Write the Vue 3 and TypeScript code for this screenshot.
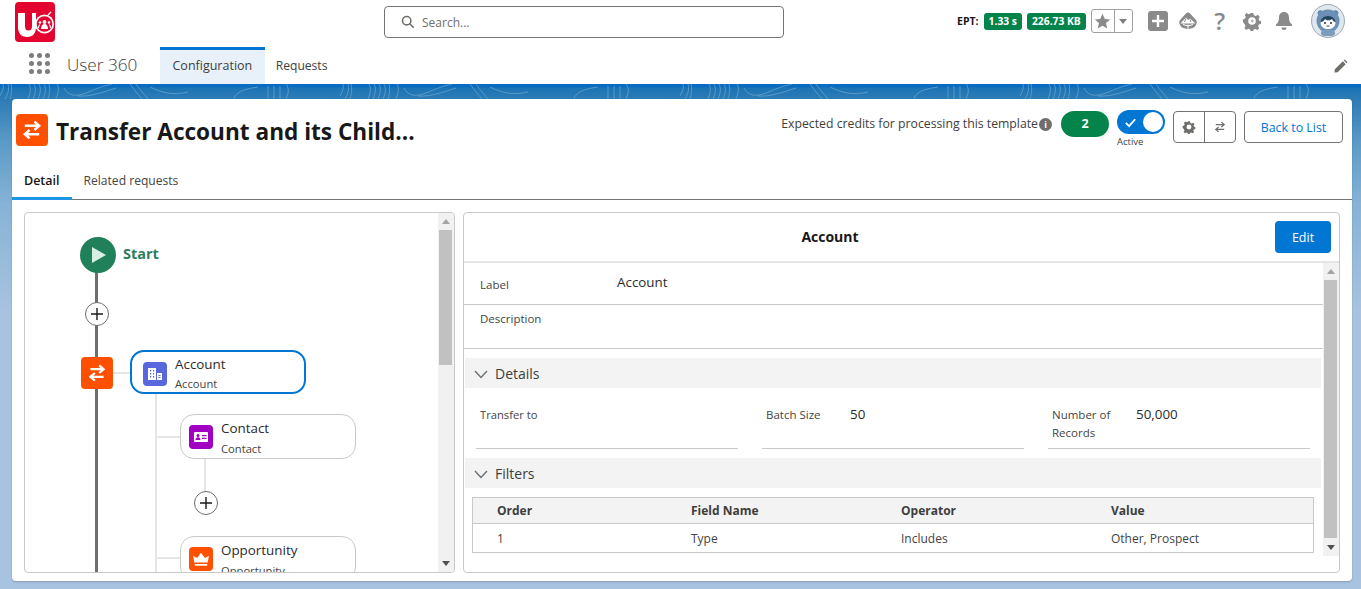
<script setup lang="ts">
const headers = ['Order', 'Field Name', 'Operator', 'Value']
const cells = ['1', 'Type', 'Includes', 'Other, Prospect']
const contours = [
  'M0 12C3 6 4 4 3 0M5 15C9 8 9 5 8 0M10 15C12 8 12 5 11 0',
  'M28 15C31 8 31 4 29 0M33 15C36 8 36 4 34 0M38 15C41 8 41 4 39 0M43 15C46 8 46 4 44 0M48 15C50 8 50 4 49 0M56 15C59 8 59 4 57 0',
  'M64 4C68 12 76 13 86 9S100 3 112 0M78 12C90 13 104 8 116 4',
  'M130 0C134 6 138 10 142 15M136 0C140 6 144 10 148 15M150 3C160 8 172 12 188 8',
  'M234 15C236 8 244 5 258 3M268 15V2M274 15V2M280 15V2M286 15C289 8 289 4 286 0',
]
const offsets = [0, 340, 680, 1020]
</script>

<template>
  <div class="page">
    <header class="top">
      <div class="logo">
        <svg viewBox="0 0 40 40" width="40" height="40">
          <rect width="40" height="40" rx="4" fill="#e4032e" />
          <path d="M3 11h7v13c0 3 1 4.500 3.500 4.500S17 27 17 24V11h4v14c0 6-3 10-9 10S3 31 3 25z" fill="#fff" />
          <circle cx="29.500" cy="22" r="9.500" fill="#fff" />
          <circle cx="29.500" cy="22" r="7.800" fill="#e4032e" />
          <circle cx="29.500" cy="20" r="1.900" fill="#fff" />
          <path d="M26 27c0-3 1.200-5 3.500-5s3.500 2 3.500 5z" fill="#fff" />
          <circle cx="25" cy="20.500" r="1.300" fill="#fff" />
          <circle cx="34" cy="20.500" r="1.300" fill="#fff" />
          <path d="M23.500 26c0-2 .5-3 1.500-3.500M35.500 26c0-2-.5-3-1.500-3.500" stroke="#fff" stroke-width="1.200" fill="none" />
          <path d="M33 13l3-3" stroke="#fff" stroke-width="1.200" />
        </svg>
      </div>
      <div class="search">
        <svg viewBox="0 0 16 16" width="14" height="14" fill="none" stroke="#706e6b" stroke-width="1.800">
          <circle cx="6.500" cy="6.500" r="4.800" /><path d="M10 10l4.500 4.500" />
        </svg>
        <span>Search...</span>
      </div>
      <div class="tools">
        <b class="ept">EPT:</b>
        <span class="metric">1.33 s</span>
        <span class="metric">226.73 KB</span>
        <div class="fav">
          <span class="fav-star">
            <svg viewBox="0 0 20 20" width="17" height="17"><path d="M10 1l2.700 6 6.300.6-4.800 4.200 1.400 6.400L10 15l-5.600 3.200 1.400-6.400L1 7.600 7.300 7z" fill="#8a8a8a" /></svg>
          </span>
          <span class="fav-caret"><i class="caret"></i></span>
        </div>
        <svg class="plus-box" viewBox="0 0 20 20" width="20" height="20">
          <rect width="20" height="20" rx="3" fill="#8a8a8a" /><path d="M10 4v12M4 10h12" stroke="#fff" stroke-width="2.400" />
        </svg>
        <svg class="tool" viewBox="0 0 20 20" width="20" height="20">
          <path d="M10 1.500c1 0 1.500.5 2.500 1.500l5.500 6c1 1.500 1 3 .2 4.500-.8 2-2.400 4-8.200 4.500-5.800-.5-7.400-2.500-8.200-4.500C1 12 1 10.500 2 9l5.500-6c1-1 1.500-1.500 2.500-1.500z" fill="#8a8a8a" />
          <path d="M2.500 12.500 8 6.500l2 2.500 2-1.500 5.500 5z" fill="#fff" />
          <path d="M8 7.500 6.500 11M12 8.500l1 2.500" stroke="#8a8a8a" stroke-width="1" />
          <path d="M10 13.500V18M5 13.500l5 1.500 5-1.500" stroke="#fff" stroke-width="1" fill="none" />
        </svg>
        <span class="help">?</span>
        <svg class="tool" viewBox="0 0 20 20" width="20" height="20">
          <path d="M8.500 1h3l.6 2.600 2.200.9 2.300-1.400 2 2.200-1.300 2.300.8 2.100 2 .6v2.800l-2.400.7-.9 2.100 1.300 2.200-2.100 2-2.200-1.300-2.200.9-.6 2.200H8.500l-.6-2.400-2.200-.8-2.200 1.300-2-2.100 1.300-2.200-.9-2.200L-.1 11V8.300l2.300-.7.9-2.100L1.900 3.200 4 1.200l2.200 1.400 2-.9z" fill="#8a8a8a" transform="translate(1 1) scale(.9)" />
          <circle cx="10" cy="10" r="3.800" fill="#fff" /><path d="M10.800 7.500 8.700 10.400h1.900l-1 2.300 2.300-3.100h-1.800z" fill="#8a8a8a" />
        </svg>
        <svg class="tool" viewBox="0 0 20 20" width="20" height="20">
          <path d="M10 1c-3 0-5 2.300-5 5.300 0 4-1 5.700-3 7.200v1.500h16v-1.500c-2-1.500-3-3.200-3-7.200 0-3-2-5.300-5-5.300z" fill="#8a8a8a" />
          <path d="M7.500 16.500a2.500 2.500 0 0 0 5 0z" fill="#8a8a8a" />
        </svg>
        <svg class="avatar" viewBox="0 0 34 34" width="34" height="34">
          <circle cx="17" cy="17" r="16.500" fill="#dfe7ef" stroke="#8c97a3" stroke-width=".8" />
          <circle cx="9.500" cy="9" r="2.800" fill="#5f86ad" /><circle cx="24.500" cy="9" r="2.800" fill="#5f86ad" />
          <circle cx="17" cy="17" r="11.500" fill="#6b90b5" />
          <rect x="10" y="26" width="14" height="6" rx="3" fill="#7e9cbb" />
          <path d="M9.500 19c1-4 3.500-5.500 7.500-5.500s6.500 1.500 7.500 5.500c-.5 4-3.500 6-7.500 6s-7-2-7.500-6z" fill="#fff" />
          <path d="M9.500 18c2 0 3.500-1 4.500-3 1 1.500 5 2 7 0 1 2 2 3 3.500 3-.5-3-3-6-7.500-6s-7 3-7.500 6z" fill="#27445f" />
          <circle cx="14" cy="19" r="1" fill="#24303c" /><circle cx="20" cy="19" r="1" fill="#24303c" />
          <path d="M15.500 22h3" stroke="#24303c" stroke-width=".9" />
        </svg>
      </div>
    </header>

    <nav class="nav">
      <div class="waffle"><i v-for="n in 9" :key="n"></i></div>
      <span class="app-name">User 360</span>
      <a class="nav-tab active">Configuration</a>
      <a class="nav-tab">Requests</a>
      <svg class="pencil" viewBox="0 0 16 16" width="15" height="15">
        <path d="M2 11 10.500 2.500l3 3L5 14l-3.500.5zM11.500 1.500l1-1 3 3-1 1z" fill="#706e6b" />
      </svg>
    </nav>

    <main class="stage">
      <svg class="contour" viewBox="0 0 1361 15" width="1361" height="15" fill="none" stroke="#6fa9d0" stroke-width=".7">
        <g v-for="x in offsets" :key="x" :transform="`translate(${x} 0)`">
          <path v-for="d in contours" :key="d" :d="d" />
        </g>
      </svg>
      <section class="card">
        <div class="head">
          <span class="badge big">
            <svg viewBox="0 0 20 20" width="24" height="24" fill="none" stroke="#fff" stroke-width="2">
              <path d="M4 6.500h12M12 3l4 3.500L12 10M16 13.500H4M8 10l-4 3.500L8 17" />
            </svg>
          </span>
          <h1>Transfer Account and its Child...</h1>
          <div class="actions">
            <span class="credits">Expected credits for processing this template</span>
            <span class="info">i</span>
            <span class="credit-pill">2</span>
            <div class="toggle-wrap">
              <span class="toggle">
                <svg viewBox="0 0 14 14" width="13" height="13" fill="none" stroke="#fff" stroke-width="2"><path d="M2 7.500 5.500 11 12 3.500" /></svg>
                <i></i>
              </span>
              <small>Active</small>
            </div>
            <div class="btn-group">
              <span>
                <svg viewBox="0 0 20 20" width="14" height="14">
                  <path d="M8.500 1h3l.6 2.600 2.200.9 2.300-1.400 2 2.200-1.300 2.300.8 2.100 2 .6v2.800l-2.400.7-.9 2.100 1.300 2.200-2.100 2-2.200-1.300-2.200.9-.6 2.200H8.500l-.6-2.400-2.200-.8-2.200 1.300-2-2.100 1.300-2.200-.9-2.200L-.1 11V8.300l2.300-.7.9-2.100L1.900 3.200 4 1.200l2.200 1.400 2-.9z" fill="#706e6b" transform="translate(1 1) scale(.9)" />
                  <circle cx="10" cy="10" r="3.500" fill="#fff" />
                </svg>
              </span>
              <span>
                <svg viewBox="0 0 20 20" width="14" height="14" fill="none" stroke="#706e6b" stroke-width="1.800">
                  <path d="M4 6.500h12M12 3l4 3.500L12 10M16 13.500H4M8 10l-4 3.500L8 17" />
                </svg>
              </span>
            </div>
            <button class="back">Back to List</button>
          </div>
        </div>

        <div class="tabs">
          <a class="tab active">Detail</a>
          <a class="tab">Related requests</a>
        </div>

        <div class="panels">
          <div class="panel left">
            <div class="canvas">
              <i class="line main"></i>
              <i class="line branch"></i>
              <i class="line h h1"></i>
              <i class="line h h2"></i>
              <i class="line h h3"></i>
              <i class="line contact-v"></i>

              <span class="start-circle">
                <svg viewBox="0 0 36 36" width="36" height="36"><path d="M12 10 26 18 12 26z" fill="#d8ede3" /></svg>
              </span>
              <span class="start-label">Start</span>
              <span class="add add1">
                <svg viewBox="0 0 14 14" width="14" height="14"><path d="M7 1v12M1 7h12" stroke="#181818" stroke-width="1.400" /></svg>
              </span>
              <span class="badge step">
                <svg viewBox="0 0 20 20" width="22" height="22" fill="none" stroke="#fff" stroke-width="2">
                  <path d="M4 6.500h12M12 3l4 3.500L12 10M16 13.500H4M8 10l-4 3.500L8 17" />
                </svg>
              </span>

              <div class="node selected n-account">
                <span class="obj blue">
                  <svg viewBox="0 0 16 16" width="16" height="16" fill="#fff">
                    <path d="M1 2h8v12H1zM10 7h5v7h-5z" /><path d="M3 4h1.200v1.500H3zM6 4h1.200v1.500H6zM3 7h1.200v1.500H3zM6 7h1.200v1.500H6zM3 10h1.200v1.500H3zM6 10h1.200v1.500H6zM11.500 9h2v1h-2zM11.500 11h2v1h-2z" fill="#5867dd" />
                  </svg>
                </span>
                <div class="node-text"><strong>Account</strong><em>Account</em></div>
              </div>
              <div class="node n-contact">
                <span class="obj purple">
                  <svg viewBox="0 0 16 16" width="16" height="16">
                    <rect x="1" y="3" width="14" height="10" rx="1" fill="#fff" />
                    <circle cx="5" cy="6.500" r="1.500" fill="#a100c2" /><path d="M2.500 11c0-2 1-2.700 2.500-2.700s2.500.7 2.500 2.700zM9 6h4.500v1.300H9zM9 8.800h4.500v1.300H9z" fill="#a100c2" />
                  </svg>
                </span>
                <div class="node-text"><strong>Contact</strong><em>Contact</em></div>
              </div>
              <span class="add add2">
                <svg viewBox="0 0 14 14" width="14" height="14"><path d="M7 1v12M1 7h12" stroke="#181818" stroke-width="1.400" /></svg>
              </span>
              <div class="node n-opp">
                <span class="obj orange">
                  <svg viewBox="0 0 16 16" width="18" height="18" fill="#fff">
                    <path d="M2 11 1 5l3.500 2L8 2.500 11.500 7 15 5l-1 6zM2.500 12.500h11V14h-11z" />
                  </svg>
                </span>
                <div class="node-text"><strong>Opportunity</strong><em>Opportunity</em></div>
              </div>
            </div>
            <div class="scrollbar s-left">
              <i class="arrow-up"></i>
              <i class="thumb"></i>
              <i class="arrow"></i>
            </div>
          </div>

          <div class="panel right">
            <div class="right-head">
              <h2>Account</h2>
              <button class="edit">Edit</button>
            </div>
            <div class="right-body">
              <div class="content">
                <div class="row label-row"><span class="lbl">Label</span><span class="val">Account</span></div>
                <div class="row desc-row"><span class="lbl">Description</span></div>

                <div class="section">
                  <svg viewBox="0 0 14 9" width="14" height="9" fill="none" stroke="#706e6b" stroke-width="1.400"><path d="M1 1l6 6.500L13 1" /></svg>
                  Details
                </div>
                <div class="fields">
                  <div class="field"><span class="lbl f1">Transfer to</span></div>
                  <div class="field"><span class="lbl f2">Batch Size</span><span class="val">50</span></div>
                  <div class="field"><span class="lbl f2">Number of Records</span><span class="val">50,000</span></div>
                </div>
                <div class="section">
                  <svg viewBox="0 0 14 9" width="14" height="9" fill="none" stroke="#706e6b" stroke-width="1.400"><path d="M1 1l6 6.500L13 1" /></svg>
                  Filters
                </div>

                <div class="table">
                  <div class="tr th"><span v-for="h in headers" :key="h">{{ h }}</span></div>
                  <div class="tr"><span v-for="c in cells" :key="c">{{ c }}</span></div>
                </div>
              </div>
              <div class="scrollbar s-right">
                <i class="arrow-up"></i>
                <i class="thumb"></i>
                <i class="arrow"></i>
              </div>
            </div>
          </div>
        </div>
      </section>
    </main>
  </div>
</template>

<style>
html, body { margin: 0; padding: 0; overflow: hidden; }
</style>

<style scoped>
.page {
  width: 1361px;
  height: 589px;
  overflow: hidden;
  display: flex;
  flex-direction: column;
  font-family: "Open Sans", "Noto Sans", sans-serif;
  color: #181818;
  background: #fff;
}
.top {
  height: 47px;
  flex: none;
  display: flex;
  align-items: flex-start;
  padding-left: 15px;
  box-sizing: border-box;
}
.logo { margin-top: 2px; height: 40px; }
.search {
  margin: 6px 0 0 329px;
  width: 400px;
  height: 32px;
  box-sizing: border-box;
  border: 1px solid #747474;
  border-radius: 4px;
  display: flex;
  align-items: center;
  gap: 7px;
  padding-left: 16px;
  font-size: 12px;
  color: #706e6b;
}
.tools {
  margin-left: 173px;
  display: flex;
  align-items: center;
  height: 36px;
  margin-top: 3px;
}
.ept { font-size: 10.500px; margin-right: 5px; }
.metric {
  background: #04844b;
  color: #fff;
  font-size: 10.300px;
  font-weight: 700;
  height: 17px;
  line-height: 17px;
  padding: 0 5px;
  border-radius: 3px;
  margin-right: 5px;
}
.fav {
  display: flex;
  height: 24px;
  border: 1px solid #a0a0a0;
  border-radius: 3px;
  margin-right: 15px;
  box-sizing: border-box;
}
.fav-star { width: 23px; display: flex; align-items: center; justify-content: center; border-right: 1px solid #a0a0a0; box-sizing: border-box; }
.fav-caret { width: 17px; display: flex; align-items: center; justify-content: center; }
.caret { width: 0; height: 0; border: 4px solid transparent; border-top: 5px solid #7f7f7f; border-bottom: 0; }
.plus-box { margin-right: 10px; }
.tool { margin-right: 12px; }
.help { font-size: 24px; color: #8a8a8a; font-weight: 600; width: 20px; text-align: center; margin-right: 12px; line-height: 24px; }
.avatar { margin-left: 5px; }

.nav {
  height: 37px;
  flex: none;
  display: flex;
  align-items: stretch;
  padding-left: 29px;
  box-sizing: border-box;
  position: relative;
}
.waffle {
  width: 22px;
  display: grid;
  grid-template-columns: repeat(3, 5px);
  grid-auto-rows: 5px;
  gap: 3px;
  align-self: center;
  margin-top: -4px;
}
.waffle i { background: #7c7c7c; border-radius: 50%; }
.app-name { font-size: 17.200px; font-weight: 300; color: #3e3e3c; margin-left: 16px; width: 93px; line-height: 36px; }
.nav-tab { font-size: 12.100px; padding: 0 11px; color: #3e3e3c; border-top: 3px solid transparent; line-height: 31px; }
.nav-tab.active { font-size: 12.500px; padding: 0 12.500px; background: #e8f1fa; border-top-color: #0176d3; }
.pencil { position: absolute; right: 13px; top: 12px; }

.stage {
  flex: 1;
  position: relative;
  padding: 15px 9px 8px 12px;
  min-height: 0;
  display: flex;
  background: linear-gradient(180deg, #0a6cc0 0, #0a6cc0 3px, #1b74b4 4px, #2c7cb6 15px, #5c9bc8 60px, #86b3d6 120px, #a8c3e0 230px, #a8c3e0 100%);
}
.contour { position: absolute; left: 0; top: 0; }
.card {
  position: relative;
  flex: 1;
  background: #fff;
  border-radius: 4px;
  box-shadow: 0 1px 2px rgba(0, 0, 0, .2);
  display: flex;
  flex-direction: column;
  min-width: 0;
}
.head {
  height: 67px;
  flex: none;
  display: flex;
  align-items: flex-start;
  padding: 15px 9px 0 4px;
  box-sizing: border-box;
}
.badge { display: flex; align-items: center; justify-content: center; background: #fe5000; border-radius: 4px; }
.badge.big { width: 32px; height: 32px; flex: none; }
h1 { margin: 0 0 0 8px; font-size: 22.600px; line-height: 36px; font-weight: 700; white-space: nowrap; }
.actions { margin-left: auto; display: flex; align-items: flex-start; }
.credits { font-size: 12.250px; line-height: 18px; margin-top: 1px; color: #3e3e3c; white-space: nowrap; }
.info {
  width: 13px; height: 13px; border-radius: 50%;
  background: #706e6b; color: #fff; font-size: 9px; font-weight: 700;
  text-align: center; line-height: 13px; margin: 4px 9px 0 1px;
}
.credit-pill {
  width: 48px; height: 26px; border-radius: 13px;
  background: #04844b; color: #fff; font-size: 12.500px; font-weight: 700;
  text-align: center; line-height: 26px; margin: -3px 8px 0 0;
}
.toggle-wrap { display: flex; flex-direction: column; align-items: flex-start; width: 48px; margin-top: -4px; margin-right: 8px; }
.toggle {
  width: 48px; height: 24px; border-radius: 12px; background: #0176d3;
  display: flex; align-items: center; justify-content: space-between; padding: 0 2px 0 7px; box-sizing: border-box;
}
.toggle i { width: 20px; height: 20px; background: #fff; border-radius: 50%; }
.toggle-wrap small { font-size: 9.500px; color: #444; line-height: 12px; margin-top: 2px; }
.btn-group {
  display: flex; height: 32px; box-sizing: border-box; margin-top: -3px;
  border: 1px solid #747474; border-radius: 4px; margin-right: 8px;
}
.btn-group span { width: 30px; display: flex; align-items: center; justify-content: center; box-sizing: border-box; }
.btn-group span + span { width: 31px; border-left: 1px solid #747474; }
.back {
  width: 99px; height: 32px; margin-top: -3px; padding: 0;
  background: #fff; border: 1px solid #747474; border-radius: 4px;
  color: #0176d3; font-family: inherit; font-size: 12.400px;
}
.tabs {
  height: 34px;
  flex: none;
  display: flex;
  border-bottom: 1px solid #747474;
  box-sizing: border-box;
}
.tab { font-size: 12.100px; color: #444; line-height: 30px; padding: 0 12px; margin-bottom: -1px; }
.tab.active { font-size: 12.500px; font-weight: 600; color: #181818; border-bottom: 3px solid #1b96e6; box-sizing: border-box; height: 34px; }
.panels {
  flex: 1;
  display: flex;
  gap: 8px;
  padding: 12px 12px 8px 12px;
  min-height: 0;
}
.panel {
  position: relative;
  border: 1px solid #c9c9c9;
  border-radius: 4px;
  box-sizing: border-box;
  overflow: hidden;
}
.left { width: 431px; flex: none; display: flex; }
.right { flex: 1; display: flex; flex-direction: column; min-width: 0; }

.canvas { position: relative; flex: 1; overflow: hidden; }
.line { position: absolute; display: block; background: #e5e5e5; }
.main { left: 70px; top: 40px; width: 3px; height: 330px; background: #706e6b; }
.branch { left: 130px; top: 181px; width: 2px; height: 190px; }
.h { height: 2px; }
.h1 { left: 88px; top: 159px; width: 18px; }
.h2 { left: 130px; top: 223px; width: 26px; }
.h3 { left: 130px; top: 344px; width: 26px; }
.contact-v { left: 179px; top: 246px; width: 2px; height: 33px; }
.start-circle {
  position: absolute; left: 55px; top: 24px; width: 36px; height: 36px;
  border-radius: 50%; background: #1f8059;
}
.start-label { position: absolute; left: 98px; top: 31px; font-size: 14.500px; font-weight: 700; color: #2e7d5c; line-height: 20px; }
.add {
  position: absolute; width: 24px; height: 24px; box-sizing: border-box;
  border: 1px solid #706e6b; border-radius: 50%; background: #fff;
  display: flex; align-items: center; justify-content: center;
}
.add1 { left: 60px; top: 89px; }
.add2 { left: 169px; top: 278px; }
.step { position: absolute; left: 56px; top: 144px; width: 32px; height: 32px; }
.node {
  position: absolute; width: 176px; height: 45px; box-sizing: border-box;
  background: #fff; border: 1px solid #c9c9c9; border-radius: 14px;
  display: flex; align-items: flex-start; padding-left: 8px;
}
.node.selected { border: 2px solid #0176d3; height: 44px; padding-left: 11px; }
.n-account { left: 105px; top: 137px; }
.n-contact { left: 155px; top: 201px; }
.n-opp { left: 155px; top: 323px; }
.obj { width: 24px; height: 24px; margin: 10px 8px 0 0; border-radius: 4px; display: flex; align-items: center; justify-content: center; flex: none; }
.blue { background: #5867dd; }
.purple { background: #a100c2; }
.orange { background: #fe5000; }
.node-text { display: flex; flex-direction: column; padding-top: 3px; }
.selected .node-text { padding-top: 2px; }
.node-text strong { font-size: 13.400px; font-weight: 400; line-height: 20px; color: #2b2b2b; }
.node-text em { font-size: 11.200px; font-style: normal; line-height: 21px; color: #444; }
.selected .node-text em { line-height: 20px; }

.scrollbar { position: relative; width: 16px; flex: none; background: #f1f1f1; }
.thumb { position: absolute; left: 1px; right: 2px; background: #c1c1c1; display: block; }
.arrow { position: absolute; left: 4px; bottom: 6px; width: 0; height: 0; border: 4px solid transparent; border-top: 5px solid #505050; border-bottom: 0; }
.arrow-up { position: absolute; left: 4px; top: 6px; width: 0; height: 0; border: 4px solid transparent; border-bottom: 5px solid #a3a3a3; border-top: 0; }
.s-left .thumb { top: 17px; height: 135px; }
.s-right .thumb { top: 17px; height: 258px; }

.right-head {
  height: 50px; flex: none; position: relative;
  display: flex; align-items: center; justify-content: center;
  padding: 0 143px 2px 0;
  border-bottom: 2px solid #e5e5e5; box-sizing: border-box;
}
h2 { margin: 0; font-size: 14px; font-weight: 700; }
.edit {
  position: absolute; right: 8px; top: 8px; width: 56px; height: 32px; padding: 0;
  background: #0176d3; color: #fff; border: 0; border-radius: 4px; font-family: inherit; font-size: 12.500px;
}
.right-body { flex: 1; display: flex; min-height: 0; }
.s-right { margin-bottom: 16px; }
.content { flex: 1; min-width: 0; }
.row { border-bottom: 1px solid #c9c9c9; display: flex; box-sizing: border-box; padding-left: 16px; }
.label-row { height: 42px; padding-top: 10px; }
.desc-row { height: 44px; padding-top: 5px; }
.lbl { font-size: 11.500px; color: #444; line-height: 18px; }
.val { font-size: 13.400px; color: #2b2b2b; line-height: 18px; }
.label-row .lbl { width: 137px; padding-top: 3px; }
.section {
  height: 30px; margin: 9px 2px 0 1px; background: #f3f3f3;
  display: flex; align-items: center; gap: 7px; padding-left: 9px;
  font-size: 14px; color: #3e3e3c;
}
.section svg { margin-top: 2px; }
.fields { display: flex; gap: 24px; padding: 0 13px 0 12px; height: 61px; box-sizing: border-box; }
.field {
  flex: 1; border-bottom: 1px solid #c9c9c9; display: flex;
  padding: 17px 0 0 4px; box-sizing: border-box;
}
.f2 { width: 84px; flex: none; padding-top: 1px; }
.f1 { padding-top: 1px; font-size: 11.200px; }
.table { margin: 9px 9px 0 8px; border: 1px solid #c9c9c9; }
.tr { display: grid; grid-template-columns: 194px 210px 210px 1fr; padding-left: 24px; height: 28px; align-items: center; font-size: 12px; color: #444; }
.th { height: 26px; background: #f3f3f3; border-bottom: 1px solid #c9c9c9; font-weight: 700; color: #3e3e3c; box-sizing: border-box; }
</style>
